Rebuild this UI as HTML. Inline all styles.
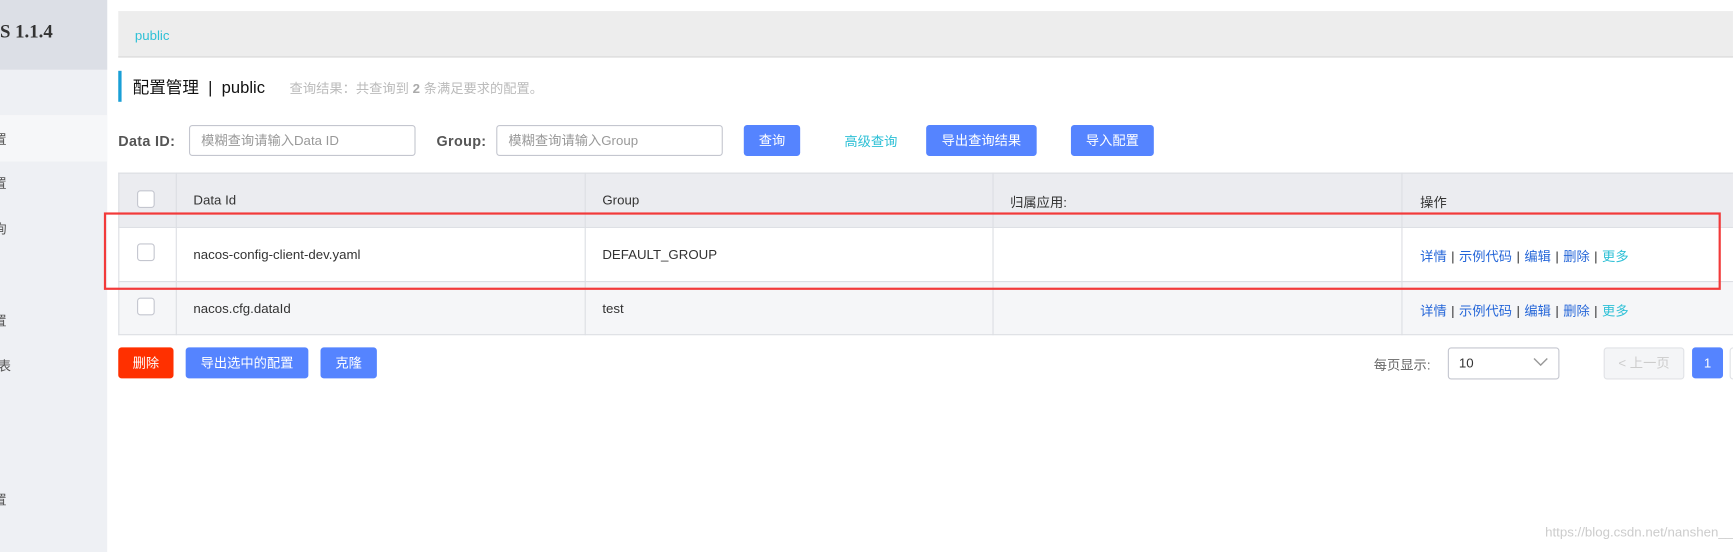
<!DOCTYPE html>
<html><head><meta charset="utf-8"><style>
html,body{margin:0;padding:0;width:1733px;height:551px;overflow:hidden;background:#fff}
#w{position:absolute;left:0;top:0;width:1568px;height:499px;transform:scale(1.1052,1.1064);transform-origin:0 0;font-family:"Liberation Sans","Noto Sans CJK SC",sans-serif;font-size:12px;color:#333}
.a{position:absolute;white-space:nowrap}
.btn{position:absolute;height:28px;line-height:28px;border-radius:3px;background:#5584ff;color:#fff;text-align:center;font-size:12px}
.inp{position:absolute;height:26px;border:1px solid #c4c6cf;border-radius:3px;background:#fff;color:#999;line-height:26px;padding-left:10px;box-sizing:content-box}
.vl{position:absolute;width:1px;background:#dcdee3}
.hl{position:absolute;height:1px;background:#dcdee3}
.cb{position:absolute;width:14px;height:14px;border:1px solid #c4c6cf;border-radius:3px;background:#fff}
.ops{color:#2566d8}
.ops span{color:#333;margin:0 4px}
.ops b{font-weight:normal;color:#2ec0d6}
</style></head><body><div id="w">
<div class="a" style="left:0;top:0;width:97px;height:499px;background:#eef0f4"></div>
<div class="a" style="left:0;top:0;width:97px;height:63px;background:#dcdfe6"></div>
<div class="a" style="left:0;top:19px;font:bold 17px 'Liberation Serif',serif;color:#333">S 1.1.4</div>
<div class="a" style="left:0;top:104px;width:97px;height:42px;background:#f6f7f9"></div>
<div class="a" style="left:-6px;top:117px;color:#555">置</div>
<div class="a" style="left:-6px;top:157px;color:#555">置</div>
<div class="a" style="left:-6px;top:198px;color:#555">询</div>
<div class="a" style="left:-6px;top:281px;color:#555">置</div>
<div class="a" style="left:-2px;top:322px;color:#555">表</div>
<div class="a" style="left:-6px;top:443px;color:#555">置</div>

<div class="a" style="left:107px;top:10px;width:1461px;height:41px;background:#ededed;border-bottom:1px solid #d6d6d6"></div>
<div class="a" style="left:122px;top:25px;color:#2ec0d6">public</div>

<div class="a" style="left:107px;top:64px;width:3px;height:28px;background:#1a9fd6"></div>
<div class="a" style="left:120px;top:68px;font-size:15px;color:#111">配置管理 &nbsp;|&nbsp; public</div>
<div class="a" style="left:262px;top:71px;color:#bbb">查询结果：共查询到 <b style="color:#aaa">2</b> 条满足要求的配置。</div>

<div class="a" style="left:107px;top:120px;font-weight:bold;color:#555;font-size:13px;letter-spacing:0.3px">Data ID:</div>
<div class="inp" style="left:171px;top:113px;width:193px">模糊查询请输入Data ID</div>
<div class="a" style="left:395px;top:120px;font-weight:bold;color:#555;font-size:13px;letter-spacing:0.3px">Group:</div>
<div class="inp" style="left:449px;top:113px;width:193px">模糊查询请输入Group</div>
<div class="btn" style="left:673px;top:113px;width:51px">查询</div>
<div class="a" style="left:764px;top:119px;color:#2ec0d6">高级查询</div>
<div class="btn" style="left:838px;top:113px;width:100px">导出查询结果</div>
<div class="btn" style="left:969px;top:113px;width:75px">导入配置</div>

<div class="a" style="left:107px;top:156px;width:1461px;height:49px;background:#ebecf0"></div>
<div class="a" style="left:107px;top:254px;width:1461px;height:48px;background:#f5f6f8"></div>
<div class="hl" style="left:107px;top:156px;width:1461px"></div>
<div class="hl" style="left:107px;top:205px;width:1461px"></div>
<div class="hl" style="left:107px;top:254px;width:1461px"></div>
<div class="hl" style="left:107px;top:302px;width:1461px"></div>
<div class="vl" style="left:107px;top:156px;height:147px"></div>
<div class="vl" style="left:159px;top:156px;height:147px"></div>
<div class="vl" style="left:529px;top:156px;height:147px"></div>
<div class="vl" style="left:898px;top:156px;height:147px"></div>
<div class="vl" style="left:1268px;top:156px;height:147px"></div>
<div class="cb" style="left:124px;top:172px"></div>
<div class="cb" style="left:124px;top:220px"></div>
<div class="cb" style="left:124px;top:269px"></div>
<div class="a" style="left:175px;top:174px">Data Id</div>
<div class="a" style="left:545px;top:174px">Group</div>
<div class="a" style="left:914px;top:174px">归属应用:</div>
<div class="a" style="left:1285px;top:174px">操作</div>
<div class="a" style="left:175px;top:223px">nacos-config-client-dev.yaml</div>
<div class="a" style="left:545px;top:223px">DEFAULT_GROUP</div>
<div class="a ops" style="left:1285px;top:223px">详情<span>|</span>示例代码<span>|</span>编辑<span>|</span>删除<span>|</span><b>更多</b></div>
<div class="a" style="left:175px;top:272px">nacos.cfg.dataId</div>
<div class="a" style="left:545px;top:272px">test</div>
<div class="a ops" style="left:1285px;top:272px">详情<span>|</span>示例代码<span>|</span>编辑<span>|</span>删除<span>|</span><b>更多</b></div>
<div class="a" style="left:94px;top:192px;width:1459px;height:66px;border:2px solid #f23a3a"></div>

<div class="btn" style="left:107px;top:314px;width:50px;background:#ff3000">删除</div>
<div class="btn" style="left:168px;top:314px;width:111px">导出选中的配置</div>
<div class="btn" style="left:290px;top:314px;width:51px">克隆</div>
<div class="a" style="left:1243px;top:321px;color:#666">每页显示:</div>
<div class="a" style="left:1310px;top:314px;width:99px;height:27px;border:1px solid #c4c6cf;border-radius:3px"></div>
<div class="a" style="left:1320px;top:321px;color:#333">10</div>
<svg class="a" style="left:1387px;top:322px" width="14" height="10"><path d="M1 2 L7 8 L13 2" stroke="#999" stroke-width="1.3" fill="none"/></svg>
<div class="a" style="left:1451px;top:314px;width:71px;height:27px;border:1px solid #e0e2e6;border-radius:3px;background:#f4f5f7;color:#ccc;line-height:27px;text-align:center">&lt; 上一页</div>
<div class="btn" style="left:1531px;top:314px;width:28px">1</div>
<div class="a" style="left:1565px;top:314px;width:10px;height:27px;border:1px solid #e0e2e6;border-radius:3px"></div>
<div class="a" style="left:1398px;top:474px;color:#ccc;font-size:12px">https://blog.csdn.net/nanshen__</div>
</div></body></html>
